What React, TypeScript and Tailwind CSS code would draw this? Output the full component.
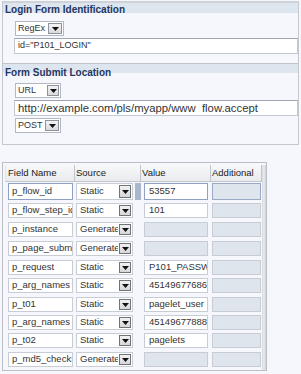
import React from 'react';

const Arrow = () => (
  <svg width="7" height="4" viewBox="0 0 7 4" className="block">
    <path d="M0 0h7L3.5 4z" fill="#111" />
  </svg>
);

function TopSelect({ label, w, btn }: { label: string; w: string; btn: string }) {
  return (
    <div className={`${w} h-[15px] ml-[12px] flex items-stretch bg-white border border-[#b3b9c2]`}>
      <div className="flex-1 pl-[2px] flex items-center text-[9px] text-[#333] overflow-hidden whitespace-nowrap">{label}</div>
      <div className={`${btn} m-[1px] flex items-center justify-center border border-[#8d939b] bg-[linear-gradient(#f4f4f4,#d9d9d9)]`}>
        <Arrow />
      </div>
    </div>
  );
}

type Row = { name: string; source: string; value: string; h: string; sel?: boolean };

const rows: Row[] = [
  { name: 'p_flow_id', source: 'Static', value: '53557', h: 'h-[20px]', sel: true },
  { name: 'p_flow_step_id', source: 'Static', value: '101', h: 'h-[19px]' },
  { name: 'p_instance', source: 'Generated', value: '', h: 'h-[19px]' },
  { name: 'p_page_submission_id', source: 'Generated', value: '', h: 'h-[19px]' },
  { name: 'p_request', source: 'Static', value: 'P101_PASSWORD', h: 'h-[18px]' },
  { name: 'p_arg_names', source: 'Static', value: '4514967768627', h: 'h-[19px]' },
  { name: 'p_t01', source: 'Static', value: 'pagelet_user', h: 'h-[18px]' },
  { name: 'p_arg_names', source: 'Static', value: '4514967788827', h: 'h-[18px]' },
  { name: 'p_t02', source: 'Static', value: 'pagelets', h: 'h-[19px]' },
  { name: 'p_md5_checksum', source: 'Generated', value: '', h: 'h-[19px]' },
];

export default function App() {
  return (
    <div
      className="w-[301px] h-[374px] bg-[#f6f7fc] overflow-hidden pt-[1px] pl-[2px]"
      style={{ fontFamily: '"Liberation Sans", Arial, sans-serif' }}
    >
      {/* top panel */}
      <div className="w-[297px] h-[144px] border border-[#c3c7ce] border-t-2 border-t-[#cfd2d7] flex flex-col">
        <div className="bg-[linear-gradient(#dde5ef_0,#dde5ef_10px,transparent_10px)] pt-[2px] pl-[2px] text-[10px] leading-[10px] font-bold text-[#1f3762]">
          Login Form Identification
        </div>
        <div className="mt-[6px]">
          <TopSelect label="RegEx" w="w-[49px]" btn="w-[14px]" />
        </div>
        <div className="mt-[2px] ml-[11px] h-[16px] bg-white border border-[#c4c9d1] border-t-[#9ea5af] flex items-center pl-[3px] text-[9px] text-[#333] whitespace-nowrap overflow-hidden">
          id="P101_LOGIN"
        </div>
        <div className="mt-[9px] border-t border-[#bfc4cc] bg-[linear-gradient(#dde5ef_0,#dde5ef_9px,transparent_9px)] pt-[4px] pl-[2px] text-[10px] leading-[10px] font-bold text-[#1f3762]">
          Form Submit Location
        </div>
        <div className="mt-[5px]">
          <TopSelect label="URL" w="w-[46px]" btn="w-[12px]" />
        </div>
        <div className="mt-[2px] ml-[11px] h-[16px] bg-white border border-[#c4c9d1] border-t-[#9ea5af] flex items-center pl-[3px] text-[11.3px] text-[#333] whitespace-nowrap overflow-hidden">
          http://example.com/pls/myapp/www&nbsp;&nbsp;flow.accept
        </div>
        <div className="mt-[2px]">
          <TopSelect label="POST" w="w-[46px]" btn="w-[14px]" />
        </div>
      </div>

      {/* table panel */}
      <div className="mt-[17px] w-[265px] h-[209px] border border-[#babec5] flex">
        <div className="pl-[2px] pt-[2px] w-[259px]">
          <div className="grid grid-cols-[70px_66px_70px_51px] h-[17px] text-[9.5px] text-[#222]">
            {['Field Name', 'Source', 'Value', 'Additional'].map((t, i) => (
              <div
                key={t}
                className={`flex items-center border-r border-b border-[#c2c6cc] bg-[linear-gradient(#f7f8f9,#e9ebee)] ${i === 0 ? 'pl-[2px] border-l border-l-[#e2e4e8]' : 'pl-[1px]'}`}
              >
                {t}
              </div>
            ))}
          </div>
          {rows.map((r, idx) => {
            const gen = r.source === 'Generated';
            const bc = r.sel ? 'border-[#8fa2c2]' : 'border-[#c8cdd5]';
            return (
              <div key={idx} className={`grid grid-cols-[70px_66px_70px_51px] ${r.h} text-[9.5px] text-[#333]`}>
                <div className="pt-[1px]">
                  <div className={`ml-[3px] w-[65px] ${r.sel ? 'h-[17px]' : 'h-[15px]'} bg-white border ${bc} flex items-center pl-[3px] whitespace-nowrap overflow-hidden`}>
                    {r.name}
                  </div>
                </div>
                <div className="pt-[1px] flex">
                  <div className={`ml-[1px] w-[57px] ${r.sel ? 'h-[17px]' : 'h-[15px]'} bg-white border border-[#c8cdd5] flex items-stretch`}>
                    <div className="flex-1 pl-[3px] flex items-center whitespace-nowrap overflow-hidden">{r.source}</div>
                    <div className="w-[12px] m-[1px] flex items-center justify-center border border-[#6f747b] bg-[linear-gradient(#f2f2f2,#d6d6d6)]">
                      <Arrow />
                    </div>
                  </div>
                  {r.sel && <div className="ml-[2px] w-[6px] h-[17px] bg-[#a9b6cc]" />}
                </div>
                <div className="pt-[1px]">
                  <div
                    className={`ml-[3px] w-[64px] ${r.sel ? 'h-[17px]' : 'h-[15px]'} border ${gen ? 'bg-[#dfe5ed] border-[#c8cdd5]' : 'bg-white ' + bc} flex items-center pl-[4px] whitespace-nowrap overflow-hidden`}
                  >
                    {r.value}
                  </div>
                </div>
                <div className="pt-[1px]">
                  <div className={`ml-[1px] w-[49px] ${r.sel ? 'h-[17px]' : 'h-[15px]'} border ${r.sel ? 'border-[#9aa9c4]' : 'border-[#c8cdd5]'} bg-[#dfe5ed]`} />
                </div>
              </div>
            );
          })}
        </div>
        <div className="mt-[2px] w-[4px] bg-[linear-gradient(90deg,#d4d7dc,#eceef1,#c9cdd3)]" />
      </div>
    </div>
  );
}
